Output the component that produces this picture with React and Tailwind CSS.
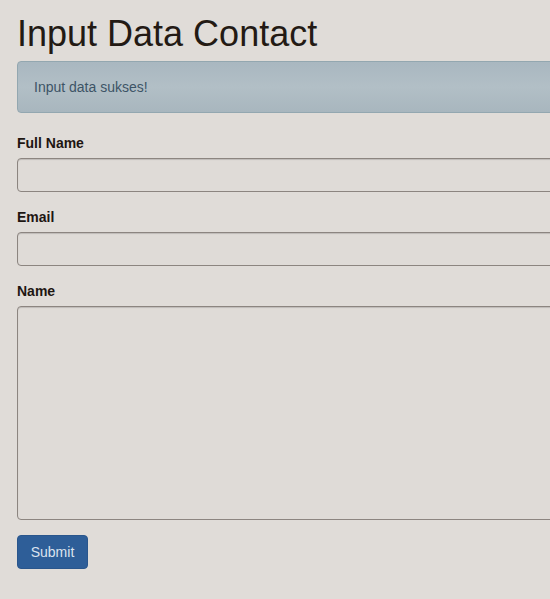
export default function App() {
  const font = { fontFamily: '"Liberation Sans", Arial, sans-serif' };
  return (
    <div className="w-[550px] h-[599px] overflow-hidden bg-[#e0dcd8]" style={font}>
      <div className="w-[640px] pl-[17px] pt-[14px]">
        <h1 className="text-[36px] leading-[40px] text-[#231a14] font-normal">Input Data Contact</h1>
        <div className="mt-[7px] h-[52px] flex items-center pl-[16px] rounded-[4px] border border-[#93a7b0] bg-gradient-to-b from-[#a9b7c0] via-[#b2bfc6] to-[#a8b6be] text-[14px] text-[#3d5466]">
          Input data sukses!
        </div>
        <form className="mt-[20px]">
          <label className="block text-[14px] leading-[20px] font-bold text-[#1e1612] mb-[5px]">Full Name</label>
          <input className="block w-full h-[34px] rounded-[4px] border border-[#8c8580] bg-[#dfdbd7] shadow-[inset_0_1px_1px_rgba(0,0,0,0.15)]" />
          <label className="block mt-[15px] text-[14px] leading-[20px] font-bold text-[#1e1612] mb-[5px]">Email</label>
          <input className="block w-full h-[34px] rounded-[4px] border border-[#8c8580] bg-[#dfdbd7] shadow-[inset_0_1px_1px_rgba(0,0,0,0.15)]" />
          <label className="block mt-[15px] text-[14px] leading-[20px] font-bold text-[#1e1612] mb-[5px]">Name</label>
          <textarea className="block w-full h-[214px] rounded-[4px] border border-[#8c8580] bg-[#dfdbd7] shadow-[inset_0_1px_1px_rgba(0,0,0,0.15)] resize-none" />
          <button type="button" className="mt-[15px] w-[71px] h-[34px] rounded-[4px] bg-[#2e5e98] border border-[#2a568c] text-[14px] text-[#dbe3ee]">
            Submit
          </button>
        </form>
      </div>
    </div>
  );
}
